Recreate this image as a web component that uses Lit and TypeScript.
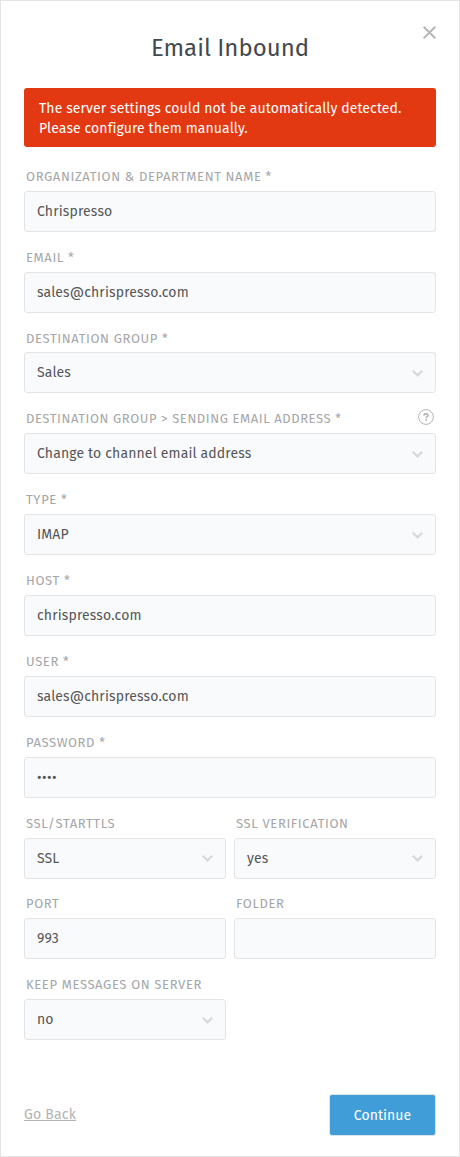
import { LitElement, html, css, nothing } from "lit";
import { customElement, property } from "lit/decorators.js";
import { classMap } from "lit/directives/class-map.js";

type Kind = "text" | "select" | "password";

interface Field {
  label: string;
  value: string;
  kind: Kind;
  help?: boolean;
  half?: boolean;
  tight?: boolean;
  raised?: boolean;
}

const FIELDS: Field[] = [
  { label: "Organization & Department Name *", value: "Chrispresso", kind: "text" },
  { label: "Email *", value: "sales@chrispresso.com", kind: "text" },
  { label: "Destination Group *", value: "Sales", kind: "select", tight: true },
  { label: "Destination Group > Sending Email Address *", value: "Change to channel email address", kind: "select", help: true },
  { label: "Type *", value: "IMAP", kind: "select" },
  { label: "Host *", value: "chrispresso.com", kind: "text" },
  { label: "User *", value: "sales@chrispresso.com", kind: "text" },
  { label: "Password *", value: "••••", kind: "password" },
  { label: "SSL/STARTTLS", value: "SSL", kind: "select", half: true, raised: true },
  { label: "SSL Verification", value: "yes", kind: "select", half: true, raised: true },
  { label: "Port", value: "993", kind: "text", half: true, tight: true, raised: true },
  { label: "Folder", value: "", kind: "text", half: true, tight: true, raised: true },
  { label: "Keep messages on server", value: "no", kind: "select", half: true },
];

@customElement("form-field")
class FormField extends LitElement {
  @property() label = "";
  @property() value = "";
  @property() kind: Kind = "text";
  @property({ type: Boolean }) help = false;
  @property({ type: Boolean }) tight = false;
  @property({ type: Boolean }) raised = false;

  static styles = css`
    :host {
      display: block;
    }
    .head {
      display: flex;
      justify-content: space-between;
      align-items: flex-start;
      height: 40px;
      box-sizing: border-box;
      padding: 17px 2px 0;
    }
    .head.tight {
      height: 39px;
    }
    .head.tight.raised,
    .head.withhelp {
      padding-top: 16px;
    }
    .withhelp .label {
      padding-top: 1px;
      letter-spacing: 0.58px;
    }
    .label {
      font-size: 13px;
      line-height: 18px;
      letter-spacing: 0.63px;
      color: #a4a6a8;
      text-transform: uppercase;
      white-space: nowrap;
    }
    .help {
      display: block;
      width: 16px;
      height: 16px;
    }
    .box {
      display: flex;
      align-items: center;
      justify-content: space-between;
      height: 41px;
      box-sizing: border-box;
      padding: 0 12px;
      border: 1px solid #e2e4e6;
      border-radius: 3px;
      background: #f9fafc;
      color: #555657;
      font-size: 14px;
      line-height: 20px;
      letter-spacing: 0.14px;
    }
    .password {
      letter-spacing: 0.5px;
    }
    .chevron {
      display: block;
      width: 11px;
      height: 7px;
      margin-top: 2px;
    }
    .raised .chevron {
      margin-top: 0;
    }
  `;

  render() {
    return html`
      <div class=${classMap({ head: true, tight: this.tight, raised: this.raised, withhelp: this.help })}>
        <span class="label">${this.label}</span>
        ${this.help
          ? html`<svg class="help" viewBox="0 0 16 16" fill="none" stroke="#b2b4b5">
              <circle cx="8" cy="8" r="7.4" stroke-width="1" />
              <path d="M6 6.5C6 5.4 6.9 4.9 8 4.9s2 .6 2 1.6c0 1.2-1.8 1.2-1.8 2.7" stroke-width="1.6" />
              <path d="M8.2 10.1v1.6" stroke-width="1.7" />
            </svg>`
          : nothing}
      </div>
      <div class=${classMap({ box: true, raised: this.raised, password: this.kind === "password" })}>
        <span>${this.value}</span>
        ${this.kind === "select"
          ? html`<svg class="chevron" viewBox="0 0 11 7" fill="none" stroke="#d6d8da" stroke-width="2.2">
              <path d="M.8 .8 5.5 5.4 10.2 .8" />
            </svg>`
          : nothing}
      </div>
    `;
  }
}

@customElement("app-root")
class AppRoot extends LitElement {
  static styles = css`
    :host {
      display: block;
      font-family: "Fira Sans", "Noto Sans", sans-serif;
    }
    .dialog {
      display: flex;
      flex-direction: column;
      position: relative;
      height: 1157px;
      box-sizing: border-box;
      padding: 31px 23px 20px;
      border: 1px solid #e4e4e4;
      background: #fff;
    }
    .close {
      position: absolute;
      top: 25px;
      right: 23px;
      width: 13px;
      height: 13px;
    }
    .title {
      margin: 0;
      text-align: center;
      font-size: 24px;
      line-height: 32px;
      font-weight: 400;
      color: #434a4e;
    }
    .alert {
      margin-top: 24px;
      height: 59px;
      box-sizing: border-box;
      padding: 11px 15px 0;
      border-radius: 3px;
      background: #e33912;
      color: #fff;
      font-size: 14px;
      line-height: 20px;
      letter-spacing: 0.1px;
    }
    .form {
      display: grid;
      grid-template-columns: 1fr 1fr;
      column-gap: 8px;
      margin-top: 4px;
    }
    .wide {
      grid-column: 1 / -1;
    }
    .footer {
      display: flex;
      align-items: center;
      justify-content: space-between;
      margin-top: auto;
      font-size: 14px;
      line-height: 20px;
    }
    .back {
      color: #b3b3b3;
      letter-spacing: 0.2px;
      text-decoration: underline;
    }
    .continue {
      height: 42px;
      width: 107px;
      padding: 1px 0 0;
      border: 1px solid #dde3e8;
      border-radius: 3px;
      background: #419dd8;
      color: #fff;
      font: inherit;
      letter-spacing: 0.05px;
    }
  `;

  render() {
    return html`
      <div class="dialog">
        <svg class="close" viewBox="0 0 13 13" fill="none" stroke="#b5b7b8" stroke-width="2">
          <path d="M.7 .7 12.3 12.3M12.3 .7 .7 12.3" />
        </svg>
        <h1 class="title">Email Inbound</h1>
        <div class="alert">
          The server settings could not be automatically detected.<br />Please configure them manually.
        </div>
        <div class="form">
          ${FIELDS.map(
            (f) => html`<form-field
              class=${f.half ? "half" : "wide"}
              .label=${f.label}
              .value=${f.value}
              .kind=${f.kind}
              .help=${!!f.help}
              .tight=${!!f.tight}
              .raised=${!!f.raised}
            ></form-field>`
          )}
        </div>
        <div class="footer">
          <a class="back">Go Back</a>
          <button class="continue">Continue</button>
        </div>
      </div>
    `;
  }
}
